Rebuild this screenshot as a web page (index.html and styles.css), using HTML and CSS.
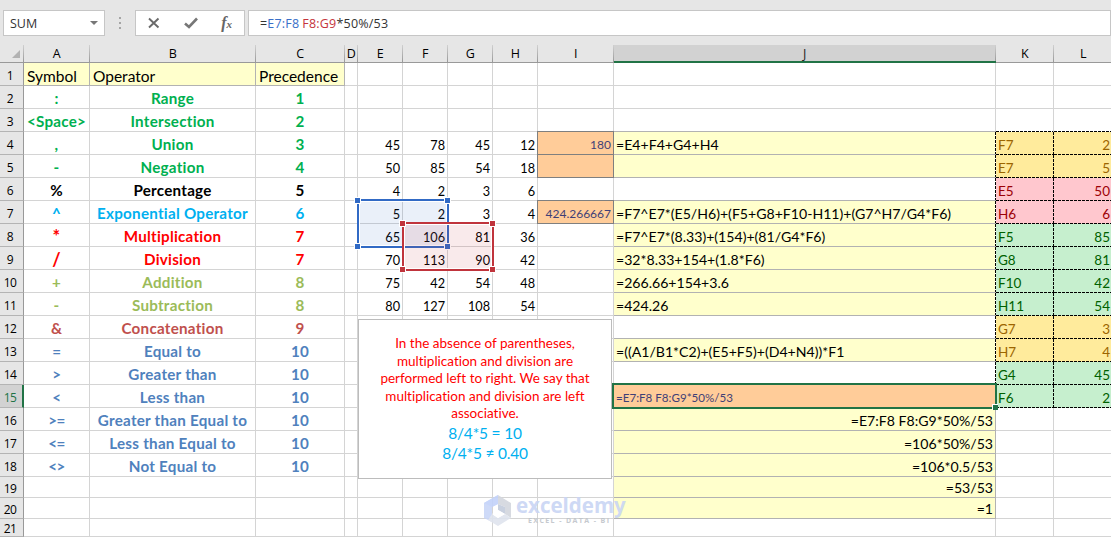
FILE: index.html
```html
<!DOCTYPE html>
<html lang="en">
<head>
  <meta charset="UTF-8">
  <title>Order of operations</title>
  <link rel="stylesheet" href="styles.css">
</head>
<body>

<!-- Formula bar -->
<div class="formula-bar">
  <div class="name-box"><span>SUM</span><i class="caret"></i></div>
  <div class="dots"><i></i><i></i><i></i></div>
  <div class="buttons">
    <svg width="12" height="12" viewBox="0 0 12 12"><path d="M1 1.5 L10.5 10.5 M10.5 1.5 L1 10.5" fill="none" stroke="#6a6a6a" stroke-width="1.9"/></svg>
    <svg width="14" height="12" viewBox="0 0 14 12"><path d="M1 6.5 L5 10 L13 1.5" fill="none" stroke="#777" stroke-width="2.6"/></svg>
    <span class="fx">f<small>x</small></span>
  </div>
  <div class="formula"><span>=</span><span class="ref-blue">E7:F8</span> <span class="ref-red">F8:G9</span><span>*50%/53</span></div>
</div>

<!-- Sheet -->
<div class="sheet">
  <table>
    <colgroup>
      <col class="w-head"><col class="w-a"><col class="w-b"><col class="w-c"><col class="w-d">
      <col class="w-n"><col class="w-n"><col class="w-n"><col class="w-n">
      <col class="w-i"><col class="w-j"><col class="w-k"><col class="w-l">
    </colgroup>
    <tr class="cols">
      <th class="corner"><i></i></th><th>A</th><th>B</th><th>C</th><th>D</th><th>E</th><th>F</th><th>G</th><th>H</th><th>I</th><th class="active">J</th><th>K</th><th>L</th>
    </tr>
    <tr>
      <th>1</th><td class="title">Symbol</td><td class="title">Operator</td><td class="title">Precedence</td><td></td>
      <td></td><td></td><td></td><td></td><td></td><td></td><td></td><td></td>
    </tr>
    <tr class="green">
      <th>2</th><td class="sym">:</td><td class="op">Range</td><td class="op">1</td><td></td>
      <td></td><td></td><td></td><td></td><td></td><td></td><td></td><td></td>
    </tr>
    <tr class="green">
      <th>3</th><td class="sym">&lt;Space&gt;</td><td class="op">Intersection</td><td class="op">2</td><td></td>
      <td></td><td></td><td></td><td></td><td></td><td></td><td class="dash-b"></td><td class="dash-b"></td>
    </tr>
    <tr class="green">
      <th>4</th><td class="sym">,</td><td class="op">Union</td><td class="op">3</td><td></td>
      <td class="num">45</td><td class="num">78</td><td class="num">45</td><td class="num">12</td><td class="input">180</td>
      <td class="calc dash-r">=E4+F4+G4+H4</td><td class="key amber">F7</td><td class="val amber">2</td>
    </tr>
    <tr class="green">
      <th>5</th><td class="sym">-</td><td class="op">Negation</td><td class="op">4</td><td></td>
      <td class="num">50</td><td class="num">85</td><td class="num">54</td><td class="num">18</td><td class="input"></td>
      <td class="calc dash-r"></td><td class="key amber">E7</td><td class="val amber">5</td>
    </tr>
    <tr class="black">
      <th>6</th><td class="sym">%</td><td class="op">Percentage</td><td class="op">5</td><td></td>
      <td class="num">4</td><td class="num">2</td><td class="num">3</td><td class="num">6</td><td></td>
      <td class="dash-r"></td><td class="key pink">E5</td><td class="val pink">50</td>
    </tr>
    <tr class="sky">
      <th>7</th><td class="sym">^</td><td class="op">Exponential Operator</td><td class="op">6</td><td></td>
      <td class="num">5</td><td class="num">2</td><td class="num">3</td><td class="num">4</td><td class="input">424.266667</td>
      <td class="calc dash-r">=F7^E7*(E5/H6)+(F5+G8+F10-H11)+(G7^H7/G4*F6)</td><td class="key pink">H6</td><td class="val pink">6</td>
    </tr>
    <tr class="red">
      <th>8</th><td class="sym">*</td><td class="op">Multiplication</td><td class="op">7</td><td></td>
      <td class="num">65</td><td class="num">106</td><td class="num">81</td><td class="num">36</td><td></td>
      <td class="calc dash-r">=F7^E7*(8.33)+(154)+(81/G4*F6)</td><td class="key mint">F5</td><td class="val mint">85</td>
    </tr>
    <tr class="red">
      <th>9</th><td class="sym">/</td><td class="op">Division</td><td class="op">7</td><td></td>
      <td class="num">70</td><td class="num">113</td><td class="num">90</td><td class="num">42</td><td></td>
      <td class="calc dash-r">=32*8.33+154+(1.8*F6)</td><td class="key mint">G8</td><td class="val mint">81</td>
    </tr>
    <tr class="olive">
      <th>10</th><td class="sym">+</td><td class="op">Addition</td><td class="op">8</td><td></td>
      <td class="num">75</td><td class="num">42</td><td class="num">54</td><td class="num">48</td><td></td>
      <td class="calc dash-r">=266.66+154+3.6</td><td class="key mint">F10</td><td class="val mint">42</td>
    </tr>
    <tr class="olive">
      <th>11</th><td class="sym">-</td><td class="op">Subtraction</td><td class="op">8</td><td></td>
      <td class="num">80</td><td class="num">127</td><td class="num">108</td><td class="num">54</td><td></td>
      <td class="calc dash-r">=424.26</td><td class="key mint">H11</td><td class="val mint">54</td>
    </tr>
    <tr class="brick">
      <th>12</th><td class="sym">&amp;</td><td class="op">Concatenation</td><td class="op">9</td><td></td>
      <td></td><td></td><td></td><td></td><td></td>
      <td class="dash-r"></td><td class="key amber">G7</td><td class="val amber">3</td>
    </tr>
    <tr class="blue">
      <th>13</th><td class="sym">=</td><td class="op">Equal to</td><td class="op">10</td><td></td>
      <td></td><td></td><td></td><td></td><td></td>
      <td class="calc dash-r">=((A1/B1*C2)+(E5+F5)+(D4+N4))*F1</td><td class="key amber">H7</td><td class="val amber">4</td>
    </tr>
    <tr class="blue">
      <th>14</th><td class="sym">&gt;</td><td class="op">Greater than</td><td class="op">10</td><td></td>
      <td></td><td></td><td></td><td></td><td></td>
      <td class="dash-r"></td><td class="key mint">G4</td><td class="val mint">45</td>
    </tr>
    <tr class="blue">
      <th class="active">15</th><td class="sym">&lt;</td><td class="op">Less than</td><td class="op">10</td><td></td>
      <td></td><td></td><td></td><td></td><td></td>
      <td class="editing">=E7:F8 F8:G9*50%/53</td><td class="key mint">F6</td><td class="val mint">2</td>
    </tr>
    <tr class="blue">
      <th>16</th><td class="sym">&gt;=</td><td class="op">Greater than Equal to</td><td class="op">10</td><td></td>
      <td></td><td></td><td></td><td></td><td></td><td class="calc right">=E7:F8 F8:G9*50%/53</td><td></td><td></td>
    </tr>
    <tr class="blue">
      <th>17</th><td class="sym">&lt;=</td><td class="op">Less than Equal to</td><td class="op">10</td><td></td>
      <td></td><td></td><td></td><td></td><td></td><td class="calc right">=106*50%/53</td><td></td><td></td>
    </tr>
    <tr class="blue">
      <th>18</th><td class="sym">&lt;&gt;</td><td class="op">Not Equal to</td><td class="op">10</td><td></td>
      <td></td><td></td><td></td><td></td><td></td><td class="calc right">=106*0.5/53</td><td></td><td></td>
    </tr>
    <tr class="short">
      <th>19</th><td></td><td></td><td></td><td></td>
      <td></td><td></td><td></td><td></td><td></td><td class="calc right">=53/53</td><td></td><td></td>
    </tr>
    <tr class="short">
      <th>20</th><td></td><td></td><td></td><td></td>
      <td></td><td></td><td></td><td></td><td></td><td class="calc right">=1</td><td></td><td></td>
    </tr>
    <tr class="last">
      <th>21</th><td></td><td></td><td></td><td></td>
      <td></td><td></td><td></td><td></td><td></td><td></td><td></td><td></td>
    </tr>
  </table>

  <!-- Ranges used by the formula being edited -->
  <div class="range range-blue"><i class="tl"></i><i class="tr"></i><i class="bl"></i><i class="br"></i></div>
  <div class="range range-red"><i class="tl"></i><i class="tr"></i><i class="bl"></i><i class="br"></i></div>
  <div class="selection"><i></i></div>

  <!-- Text box over the cells -->
  <div class="note">
    <p>In the absence of parentheses,<br>multiplication and division are<br>performed left to right. We say that<br>multiplication and division are left<br>associative.</p>
    <p class="sum">8/4*5 = 10<br>8/4*5 ≠ 0.40</p>
  </div>

  <div class="watermark">
    <svg width="28" height="31" viewBox="0 0 28 31">
      <path d="M14 0 L0 8 V23 L8 27 V12 L14 9 Z" fill="#c9d6f8"/>
      <path d="M14 0 L27 8 V23 L21 19 V12 L14 9 Z" fill="#d3d7de"/>
      <path d="M14 0 L0 8 L8 12 L14 9 Z" fill="#c3d2fa"/>
      <path d="M8 19 L14 23 L21 19 L27 23 L14 31 L4 25 Z" fill="#dfe4ee"/>
      <path d="M14 9 L21 12 V19 L14 15 Z" fill="#c3cbdc"/>
      <path d="M14 15 L21 19 L14 23 L8 19 Z" fill="#fff"/>
    </svg>
    <div class="brand"><b>exceldemy</b><small>EXCEL - DATA - BI</small></div>
  </div>
</div>

</body>
</html>
```
FILE: styles.css
```css
* { box-sizing: border-box; margin: 0; padding: 0; }

body {
  width: 1111px;
  height: 537px;
  overflow: hidden;
  background: #e6e6e6;
  font-family: Lato, "Open Sans", sans-serif;
  font-variant-ligatures: none;
  color: #000;
}

/* Formula bar */
.formula-bar {
  display: flex;
  height: 45px;
  padding: 10px 0 9px 3px;
  font: 12.5px "Open Sans", sans-serif;
  color: #333;
}

.name-box, .buttons, .formula {
  display: flex;
  align-items: center;
  height: 26px;
  background: #fff;
  border: 1px solid #c6c6c6;
}

.name-box {
  width: 102px;
  padding: 0 6px;
  justify-content: space-between;
  font-size: 12.5px;
}

.caret {
  border: 4px solid transparent;
  border-top: 4px solid #777;
  border-bottom: 0;
}

.dots {
  display: flex;
  flex-direction: column;
  justify-content: center;
  align-items: center;
  gap: 3px;
  width: 30px;
}

.dots i {
  width: 2px;
  height: 2px;
  background: #a5a5a5;
}

.buttons {
  width: 110px;
  padding: 0 12px;
  justify-content: space-between;
}

.fx {
  font: italic bold 16px/20px "Liberation Serif", serif;
  color: #666;
}

.fx small { font-size: 11px; }

.formula {
  flex: 1;
  margin-left: 3px;
  padding-left: 11px;
  letter-spacing: 0.2px;
  white-space: pre;
}

.ref-blue { color: #3a6fc8; }

.ref-red {
  margin-left: 3px;
  color: #c5343c;
}

/* Grid */
.sheet {
  position: relative;
  height: 492px;
}

table {
  width: 1113px;
  table-layout: fixed;
  border-collapse: separate;
  border-spacing: 0;
  background: #fff;
}

.w-head { width: 24px; }
.w-a { width: 66px; }
.w-b { width: 166px; }
.w-c { width: 89px; }
.w-d { width: 13px; }
.w-n { width: 45px; }
.w-i { width: 76px; }
.w-j { width: 382px; }
.w-k { width: 58px; }
.w-l { width: 59px; }

tr { height: 23px; }
tr.short { height: 21px; }
tr.last { height: 18px; }

td {
  border-right: 1px solid #d4d4d4;
  border-bottom: 1px solid #d4d4d4;
  padding-top: 4px;
  line-height: 18px;
  white-space: nowrap;
}

.short td { padding-top: 2px; }
.last td { line-height: 15px; padding-top: 0; }

th {
  padding: 4px 3px 0 0;
  border-right: 1px solid #999;
  border-bottom: 1px solid #b4b4b4;
  background: #e6e6e6;
  font: 12px/18px "Open Sans", sans-serif;
  letter-spacing: -0.5px;
}

.short th { padding-top: 3px; line-height: 17px; }
.last th { line-height: 15px; padding-top: 1px; }

.cols { height: 18px; }

.cols th {
  padding: 0 1px 0 0;
  line-height: 15px;
  font-size: 12.5px;
  border-right: 0;
  border-bottom: 1px solid #999;
  background: linear-gradient(#d0d0d0, #999) right / 1px 100% no-repeat #e6e6e6;
}

.corner i {
  display: block;
  margin-left: 12px;
  border-left: 8px solid transparent;
  border-bottom: 8px solid #b2b2b2;
  width: 0;
}

.cols .active {
  color: #222;
  background-color: #d2d2d2;
  border-bottom: 2px solid #217346;
}

tr:not(.cols) th.active {
  padding-right: 2px;
  border-right: 2px solid #217346;
  background: #d2d2d2;
  color: #217346;
}

/* Cell kinds */
.title {
  padding-top: 3px;
  padding-left: 3px;
  background: #ffffcc;
  border-color: #b2b2b2;
  font-size: 15.5px;
}

.sym, .op {
  padding-top: 2px;
  text-align: center;
  font-weight: bold;
  font-size: 15.2px;
  letter-spacing: 0.25px;
}

.red .sym { font-size: 18px; }
.blue .sym { letter-spacing: -0.5px; }

.green .sym, .green .op { color: #00b050; }
.sky .sym, .sky .op { color: #00b0f0; }
.red .sym, .red .op { color: #ff0000; }
.olive .sym, .olive .op { color: #9bbb59; }
.brick .sym, .brick .op { color: #c0504d; }
.blue .sym, .blue .op { color: #4f81bd; }

.num {
  padding-right: 2px;
  text-align: right;
  font-size: 12.7px;
}

.input {
  padding-right: 2px;
  background: #ffcc99;
  border-color: #7f7f7f;
  box-shadow: 0 -1px 0 #7f7f7f, -1px 0 0 #7f7f7f, -1px -1px 0 #7f7f7f;
  color: #3f3f76;
  font-size: 12px;
  text-align: right;
}

.calc {
  padding-left: 2px;
  background: #ffffcc;
  border-color: #b2b2b2;
  box-shadow: 0 -1px 0 #b2b2b2;
  font-size: 14.1px;
}

.right {
  padding-right: 2px;
  text-align: right;
}

.editing {
  padding-left: 2px;
  background: #ffcc99;
  color: #3f3f76;
  font-size: 11.6px;
}

.key, .val {
  border: 0;
  padding-bottom: 1px;
  font-size: 13.5px;
  background-image:
    repeating-linear-gradient(90deg, #000 0 3px, transparent 3px 4px),
    repeating-linear-gradient(#000 0 3px, transparent 3px 4px);
  background-size: 100% 1px, 1px 100%;
  background-position: bottom, right;
  background-repeat: no-repeat;
}

.key { padding-left: 2px; }

.val {
  padding-right: 3px;
  text-align: right;
}

.amber { background-color: #ffeb9c; color: #9c6500; }
.pink { background-color: #ffc7ce; color: #9c0006; }
.mint { background-color: #c6efce; color: #006100; }

.dash-r {
  border-right: 0;
  background-image: repeating-linear-gradient(#000 0 3px, #fff 3px 4px);
  background-size: 1px 100%;
  background-position: right;
  background-repeat: no-repeat;
}

.dash-b {
  border-bottom: 0;
  background: repeating-linear-gradient(90deg, #000 0 3px, #fff 3px 4px) bottom / 100% 1px no-repeat;
}

/* Range outlines */
.range {
  position: absolute;
  width: 92px;
  height: 49px;
  border: 2px solid;
  box-shadow: inset 0 0 0 1px #fff;
}

.range-blue {
  left: 357px;
  top: 154px;
  color: #316ac5;
  background: rgba(49, 106, 197, 0.1);
}

.range-red {
  left: 402px;
  top: 177px;
  color: #c0343c;
  background: rgba(192, 52, 60, 0.1);
}

.range i {
  position: absolute;
  width: 7px;
  height: 7px;
  background: currentColor;
  border: 1px solid #fff;
}

.range .tl { left: -5px; top: -4px; }
.range .tr { right: -4px; top: -4px; }
.range .bl { left: -5px; bottom: -4px; }
.range .br { right: -4px; bottom: -4px; }

.selection {
  position: absolute;
  left: 612px;
  top: 338px;
  width: 385px;
  height: 26px;
  border: 2px solid #217346;
}

.selection i {
  position: absolute;
  right: -3px;
  bottom: -3px;
  width: 6px;
  height: 6px;
  background: #217346;
  border: 1px solid #fff;
  border-width: 1px 0 0 1px;
}

/* Text box */
.note {
  position: absolute;
  left: 358px;
  top: 274px;
  width: 254px;
  height: 160px;
  padding-top: 15px;
  background: #fff;
  border: 1px solid #bcbcbc;
  color: #ff0000;
  font-size: 13.5px;
  line-height: 17.5px;
  text-align: center;
}

.note .sum {
  color: #00b0f0;
  font-size: 15.5px;
  line-height: 20.5px;
  letter-spacing: -0.2px;
}

/* Watermark */
.watermark {
  position: absolute;
  left: 484px;
  top: 450px;
  display: flex;
  gap: 4px;
  opacity: 0.9;
}

.brand {
  display: flex;
  flex-direction: column;
  color: #c9d5f4;
}

.brand b {
  font: bold 20.5px/21px "Open Sans", sans-serif;
}

.brand small {
  padding-left: 12px;
  margin-top: 1px;
  font: bold 7px/8px "Open Sans", sans-serif;
  letter-spacing: 1.4px;
  color: #c0c4ca;
}
```
